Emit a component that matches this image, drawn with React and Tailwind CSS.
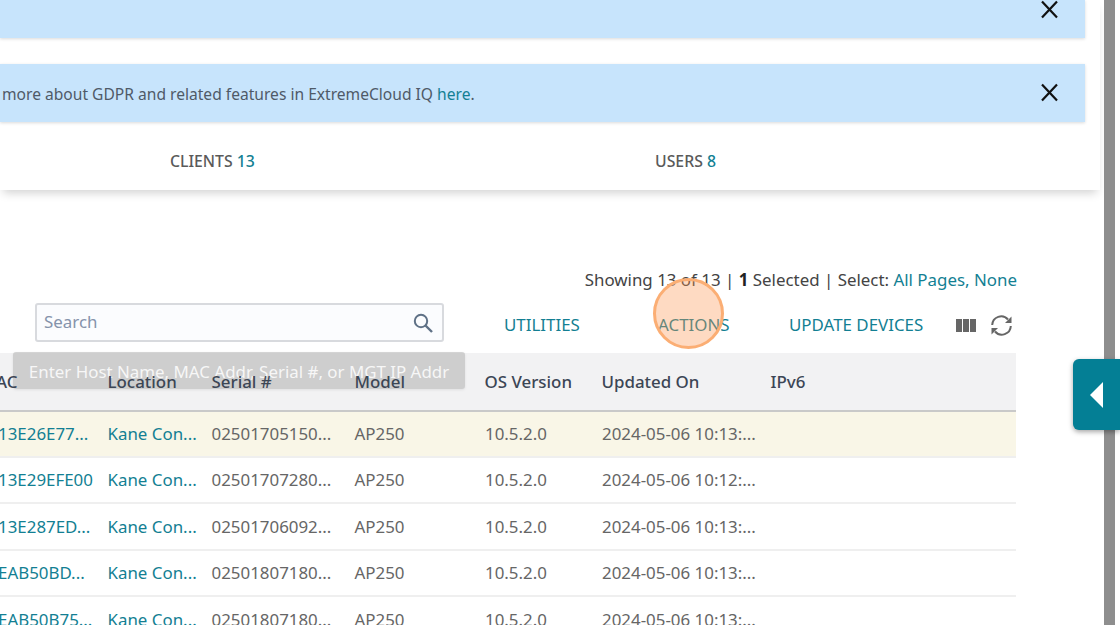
import React from "react";

const rows = [
  ["13E26E77...", "02501705150...", "2024-05-06 10:13:..."],
  ["13E29EFE00", "02501707280...", "2024-05-06 10:12:..."],
  ["13E287ED...", "02501706092...", "2024-05-06 10:13:..."],
  ["EAB50BD...", "02501807180...", "2024-05-06 10:13:..."],
  ["EAB50B75...", "02501807180...", "2024-05-06 10:13:..."],
];

function Close({ top }) {
  return (
    <svg className="absolute left-[1040px] w-[19px] h-[19px]" style={{ top }} viewBox="0 0 19 19" fill="none" stroke="#111" strokeWidth="2.2">
      <path d="M2 1.5 L17 17.5 M17 1.5 L2 17.5" />
    </svg>
  );
}

export default function App() {
  return (
    <div className="relative w-[1120px] h-[625px] overflow-hidden bg-white font-['Noto_Sans','Open_Sans',sans-serif] text-[16.9px] text-[#555]">
      <div className="absolute left-0 top-0 w-[1100px] h-[190px] bg-white shadow-[0_6px_9px_-3px_rgba(0,0,0,0.18)]" />
      <div className="absolute left-0 top-0 w-[1085px] h-[38px] bg-[#c7e4fc] shadow-[0_1px_3px_rgba(0,0,0,0.15)]" />
      <div className="absolute left-0 top-[64px] w-[1085px] h-[58px] bg-[#c7e4fc] shadow-[0_1px_3px_rgba(0,0,0,0.15)] flex items-center pl-[2px] pt-[4px] text-[15.6px] text-[#4f5a68] whitespace-nowrap">
        <span>more about GDPR and related features in ExtremeCloud IQ <span className="text-[#137f93]">here</span>.</span>
      </div>
      <Close top={0} />
      <Close top={83} />

      <div className="absolute left-[170px] top-[150px] text-[15.8px] leading-[22px] font-medium text-[#5a5a5a] whitespace-nowrap">CLIENTS <span className="text-[#137f93]">13</span></div>
      <div className="absolute left-[655px] top-[150px] text-[15.8px] leading-[22px] font-medium text-[#5a5a5a] whitespace-nowrap">USERS <span className="text-[#137f93]">8</span></div>

      <div className="absolute right-[103px] top-[268px] leading-[24px] text-[#444] whitespace-nowrap">
        Showing 13 of 13 | <b className="font-bold text-[#222]">1</b> Selected | Select: <span className="text-[#137f93]">All Pages, None</span>
      </div>

      <div className="absolute left-[35px] top-[303px] w-[409px] h-[39px] rounded-[3px] border-2 border-[#d8dade] bg-[#fbfcfe] flex items-center justify-between pl-[7px] pr-[8px]">
        <span className="text-[#8593ab] -mt-[1px]">Search</span>
        <svg width="22" height="22" viewBox="0 0 22 22" fill="none" stroke="#5f7186" strokeWidth="2">
          <circle cx="9" cy="9" r="6.2" />
          <path d="M13.5 13.5 L20 20" strokeWidth="2.4" />
        </svg>
      </div>

      <div className="absolute left-[504px] top-[313px] leading-[24px] text-[#137f93] whitespace-nowrap">UTILITIES</div>
      <div className="absolute left-[658px] top-[313px] leading-[24px] text-[#137f93] whitespace-nowrap">ACTIONS</div>
      <div className="absolute left-[789px] top-[313px] leading-[24px] text-[#137f93] whitespace-nowrap">UPDATE DEVICES</div>

      <svg className="absolute left-[955px] top-[318px]" width="22" height="14" viewBox="0 0 22 14" fill="#666">
        <rect x="1" y="1" width="6" height="13" />
        <rect x="8" y="1" width="6" height="13" />
        <rect x="15" y="1" width="6" height="13" />
      </svg>
      <svg className="absolute left-[990px] top-[314px]" width="23" height="23" viewBox="0 0 23 23" fill="none" stroke="#666" strokeWidth="2">
        <path d="M2.2 11 A9 9 0 0 1 18 5.5" />
        <path d="M20.8 12 A9 9 0 0 1 5 17.5" />
        <path d="M21.5 2.5 L21.5 9 L15 9 Z" fill="#666" stroke="none" />
        <path d="M1.5 20.5 L1.5 14 L8 14 Z" fill="#666" stroke="none" />
      </svg>

      <div className="absolute left-0 top-[353px] w-[1016px]">
        <div className="h-[58.5px] bg-[#f2f2f3] border-b-2 border-[#c9c9c9] font-medium text-[#3c4655] leading-[24px]">
          <span className="absolute z-10 left-[-4px] top-[17px]">AC</span>
          <span className="absolute z-10 left-[107.5px] top-[17px]">Location</span>
          <span className="absolute z-10 left-[211.5px] top-[17px]">Serial #</span>
          <span className="absolute z-10 left-[354.5px] top-[17px]">Model</span>
          <span className="absolute z-10 left-[484.5px] top-[17px]">OS Version</span>
          <span className="absolute z-10 left-[601.5px] top-[17px]">Updated On</span>
          <span className="absolute z-10 left-[770.5px] top-[17px]">IPv6</span>
        </div>
        {rows.map((r, i) => (
          <div key={i} className={`relative h-[46.4px] border-b-2 border-[#efefef] leading-[24px] ${i === 0 ? "bg-[#f9f6e7]" : "bg-white"}`}>
            <span className="absolute left-[-2px] top-[10.5px] text-[#137f93] whitespace-nowrap">{r[0]}</span>
            <span className="absolute left-[107.5px] top-[10.5px] text-[#137f93] whitespace-nowrap">Kane Con...</span>
            <span className="absolute left-[211.5px] top-[10.5px] text-[#666] whitespace-nowrap">{r[1]}</span>
            <span className="absolute left-[354.5px] top-[10.5px] text-[#666] whitespace-nowrap">AP250</span>
            <span className="absolute left-[485px] top-[10.5px] text-[#666] whitespace-nowrap">10.5.2.0</span>
            <span className="absolute left-[602px] top-[10.5px] text-[#666] whitespace-nowrap">{r[2]}</span>
          </div>
        ))}
      </div>

      <div className="absolute left-[13px] top-[352px] w-[452px] h-[37px] rounded-[3px] bg-[rgba(170,170,170,0.5)] flex items-center justify-center pt-[2px] text-[rgba(255,255,255,0.85)] whitespace-nowrap shadow-[0_1px_3px_rgba(0,0,0,0.08)]">
        Enter Host Name, MAC Addr, Serial #, or MGT IP Addr
      </div>

      <div className="absolute left-[653px] top-[278px] w-[71px] h-[71px] rounded-full border-[3px] border-[#fbae74] bg-[rgba(251,150,80,0.35)]" />

      <div className="absolute left-[1104px] top-0 w-[11px] h-[625px] bg-[#8e8e8e]" />

      <div className="absolute left-[1073px] top-[359px] w-[47px] h-[71px] rounded-l-[6px] bg-[#047f95] shadow-[0_2px_5px_rgba(0,0,0,0.35)] flex items-center pl-[17px]">
        <div className="w-0 h-0 border-y-[13px] border-y-transparent border-r-[13px] border-r-white" />
      </div>
    </div>
  );
}
